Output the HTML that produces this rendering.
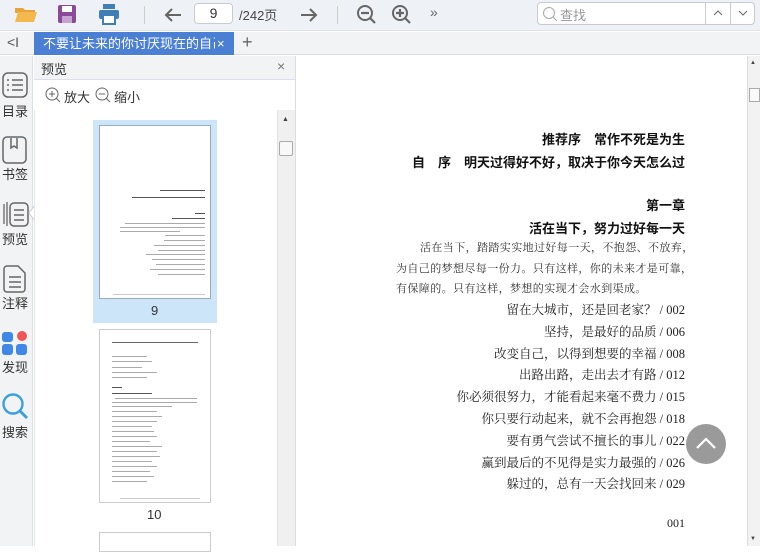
<!DOCTYPE html>
<html><head><meta charset="utf-8"><style>
*{margin:0;padding:0;box-sizing:border-box}
body{width:760px;height:546px;overflow:hidden;position:relative;background:#fff;font-family:"Liberation Sans","Noto Sans CJK SC",sans-serif;font-size:13px;color:#333}
.a{position:absolute}
.r{position:absolute;right:75px;white-space:nowrap;color:#222}
.h{font-weight:bold;font-size:13px;font-family:"Liberation Sans","Noto Sans CJK SC",sans-serif;color:#111}
.t{font-family:"Liberation Serif","Noto Serif CJK SC",serif;font-size:12.5px}
.p{position:absolute;white-space:nowrap;font-family:"Liberation Serif","Noto Serif CJK SC",serif;font-size:11px;color:#333}
.side div{position:absolute;left:0;width:30px;text-align:center;font-size:13px;color:#333}
.ln{position:absolute;height:1px;background:#aaa}
</style></head><body>
<div class="a" style="left:0;top:0;width:760px;height:31px;background:#eef2f7;border-bottom:1px solid #dfe3e8"></div>
<svg class="a" style="left:14px;top:4px" width="24" height="20"><path d="M1 4h8l2 2h10v3H1z" fill="#e7a43a"/><path d="M1 18L4 8h19l-3 10z" fill="#f3b84e"/></svg>
<svg class="a" style="left:57px;top:4px" width="20" height="20"><rect x="1" y="1" width="18" height="18" rx="2" fill="#8a4a99"/><rect x="5" y="2" width="10" height="6" fill="#fff"/><rect x="5" y="12" width="10" height="7" fill="#c9a3d0"/></svg>
<svg class="a" style="left:98px;top:3px" width="22" height="22"><rect x="5" y="1" width="12" height="5" fill="#3f7fb5"/><rect x="1" y="7" width="20" height="9" rx="2" fill="#3f7fb5"/><rect x="5" y="12" width="12" height="9" fill="#fff" stroke="#3f7fb5" stroke-width="2"/></svg>
<div class="a" style="left:144px;top:6px;width:1px;height:18px;background:#ccc"></div>
<svg class="a" style="left:163px;top:5px" width="20" height="20"><path d="M18 10H3M9 4l-6 6 6 6" stroke="#666" stroke-width="2" fill="none"/></svg>
<div class="a" style="left:194px;top:3px;width:39px;height:21px;border:1px solid #c8ccd2;border-radius:4px;background:#fff;text-align:center;line-height:19px;font-size:14px">9</div>
<div class="a" style="left:239px;top:5px;font-size:13px;color:#444">/242页</div>
<svg class="a" style="left:299px;top:5px" width="20" height="20"><path d="M2 10h15M11 4l6 6-6 6" stroke="#666" stroke-width="2" fill="none"/></svg>
<div class="a" style="left:337px;top:6px;width:1px;height:18px;background:#ccc"></div>
<svg class="a" style="left:356px;top:4px" width="22" height="22"><circle cx="9" cy="9" r="7" stroke="#666" stroke-width="2" fill="none"/><path d="M5 9h8M14 14l5 5" stroke="#666" stroke-width="2.2"/></svg>
<svg class="a" style="left:391px;top:4px" width="22" height="22"><circle cx="9" cy="9" r="7" stroke="#666" stroke-width="2" fill="none"/><path d="M5 9h8M9 5v8M14 14l5 5" stroke="#666" stroke-width="2.2"/></svg>
<div class="a" style="left:430px;top:4px;font-size:14px;color:#666">»</div>
<div class="a" style="left:537px;top:2px;width:218px;height:23px;border:1px solid #c8ccd2;border-radius:4px;background:#fff"></div>
<div class="a" style="left:705px;top:2px;width:1px;height:23px;background:#c8ccd2"></div>
<div class="a" style="left:730px;top:2px;width:1px;height:23px;background:#c8ccd2"></div>
<svg class="a" style="left:542px;top:6px" width="16" height="16"><circle cx="7" cy="7" r="5.5" stroke="#aaa" fill="none"/><path d="M11 11l4 4" stroke="#aaa"/></svg>
<div class="a" style="left:560px;top:5px;font-size:13px;color:#999">查找</div>
<svg class="a" style="left:712px;top:9px" width="12" height="8"><path d="M2 6l4-4 4 4" stroke="#666" fill="none"/></svg>
<svg class="a" style="left:737px;top:9px" width="12" height="8"><path d="M2 2l4 4 4-4" stroke="#666" fill="none"/></svg>
<div class="a" style="left:0;top:32px;width:760px;height:23px;background:#f2f3f5;border-bottom:1px solid #dcdcdc"></div>
<div class="a" style="left:7px;top:34px;font-size:14px;color:#555">&lt;I</div>
<div class="a" style="left:34px;top:32px;width:200px;height:23px;background:#4a7fd4;color:#fff;font-size:13px;line-height:23px;white-space:nowrap;overflow:hidden">
<div style="position:absolute;left:9px;top:0;width:172px;overflow:hidden;white-space:nowrap">不要让未来的你讨厌现在的自己</div>
<span style="position:absolute;left:183px;top:0">×</span></div>
<div class="a" style="left:242px;top:32px;font-size:18px;color:#666">+</div>
<div class="a side" style="left:0;top:56px;width:33px;height:490px;background:#f2f3f5;border-right:1px solid #dde">
<svg class="a" style="left:2px;top:16px" width="26" height="26"><rect x="1" y="1" width="24" height="24" rx="5" stroke="#666" stroke-width="1.5" fill="none"/><path d="M5 8h2M10 8h11M5 13h2M10 13h11M5 18h2M10 18h11" stroke="#666" stroke-width="1.5"/></svg>
<div style="top:45px">目录</div>
<svg class="a" style="left:2px;top:80px" width="26" height="28"><rect x="1" y="1" width="23" height="26" rx="4" stroke="#666" stroke-width="1.5" fill="none"/><path d="M9 2v10l3-2 3 2V2" stroke="#666" stroke-width="1.5" fill="none"/></svg>
<div style="top:108px">书签</div>
<svg class="a" style="left:2px;top:144px" width="28" height="28"><path d="M2 4v20M5 2v24" stroke="#666" stroke-width="1.3"/><rect x="8" y="3" width="18" height="23" rx="4" stroke="#666" stroke-width="1.5" fill="none"/><path d="M12 10h10M12 15h10M12 20h10" stroke="#666" stroke-width="1.5"/></svg>
<div style="top:173px">预览</div>
<svg class="a" style="left:3px;top:209px" width="24" height="28"><path d="M1 4a3 3 0 0 1 3-3h11l7 7v16a3 3 0 0 1-3 3H4a3 3 0 0 1-3-3z" stroke="#666" stroke-width="1.5" fill="none"/><path d="M6 12h12M6 17h12M6 22h12" stroke="#666" stroke-width="1.5"/></svg>
<div style="top:237px">注释</div>
<svg class="a" style="left:2px;top:274px" width="26" height="26"><rect x="0" y="2" width="11" height="10" rx="3" fill="#3f88e8"/><circle cx="20" cy="6" r="5" fill="#f25555"/><rect x="0" y="14" width="11" height="11" rx="3" fill="#3f88e8"/><rect x="14" y="14" width="11" height="11" rx="3" fill="#3f88e8"/></svg>
<div style="top:301px">发现</div>
<svg class="a" style="left:1px;top:336px" width="28" height="28"><circle cx="12" cy="12" r="9.5" stroke="#3aa0e0" stroke-width="2.4" fill="none"/><path d="M19 19l7 7" stroke="#3aa0e0" stroke-width="3"/></svg>
<div style="top:366px">搜索</div>
</div>
<svg class="a" style="left:28px;top:205px" width="8" height="16"><path d="M7 0L1 8l6 8" fill="#fff" stroke="#ccc"/></svg>
<div class="a" style="left:34px;top:56px;width:262px;height:24px;background:#f2f3f5;border-bottom:1px solid #dde"></div>
<div class="a" style="left:41px;top:59px;font-size:13px;color:#333">预览</div>
<div class="a" style="left:277px;top:58px;font-size:14px;color:#777">×</div>
<svg class="a" style="left:45px;top:87px" width="16" height="16"><circle cx="7" cy="7" r="6" stroke="#666" fill="none"/><path d="M4 7h6M7 4v6M11 11l4 4" stroke="#666"/></svg>
<div class="a" style="left:64px;top:87px;font-size:13px">放大</div>
<svg class="a" style="left:95px;top:87px" width="16" height="16"><circle cx="7" cy="7" r="6" stroke="#666" fill="none"/><path d="M4 7h6M11 11l4 4" stroke="#666"/></svg>
<div class="a" style="left:114px;top:87px;font-size:13px">缩小</div>
<div class="a" style="left:34px;top:110px;width:1px;height:436px;background:#e5e5e5"></div>
<div class="a" style="left:277px;top:110px;width:18px;height:436px;background:#f0f0f0;border-left:1px solid #e2e2e2"></div>
<div class="a" style="left:282px;top:116px;font-size:7px;color:#444">▲</div>
<div class="a" style="left:279px;top:141px;width:14px;height:15px;background:#f8f8f8;border:1px solid #aaa;border-radius:2px"></div>
<div class="a" style="left:295px;top:56px;width:1px;height:490px;background:#ddd"></div>
<div class="a" style="left:93px;top:120px;width:124px;height:203px;background:#cde5f8"></div>
<div class="a" style="left:99px;top:125px;width:112px;height:174px;background:#fff;border:1px solid #9ab"></div>
<div class="a" style="left:151px;top:303px;font-size:13px">9</div>
<div class="ln" style="left:160px;top:190px;width:45px;background:#555"></div>
<div class="ln" style="left:132px;top:197px;width:73px;background:#555"></div>
<div class="ln" style="left:195px;top:213px;width:10px;background:#555"></div>
<div class="ln" style="left:172px;top:218px;width:33px;background:#555"></div>
<div class="ln" style="left:125px;top:223px;width:80px"></div>
<div class="ln" style="left:120px;top:227px;width:85px"></div>
<div class="ln" style="left:120px;top:231px;width:60px"></div>
<div class="ln" style="left:165px;top:235px;width:40px"></div>
<div class="ln" style="left:164px;top:240px;width:41px"></div>
<div class="ln" style="left:154px;top:245px;width:51px"></div>
<div class="ln" style="left:158px;top:250px;width:47px"></div>
<div class="ln" style="left:146px;top:254px;width:59px"></div>
<div class="ln" style="left:152px;top:259px;width:53px"></div>
<div class="ln" style="left:156px;top:264px;width:49px"></div>
<div class="ln" style="left:150px;top:269px;width:55px"></div>
<div class="ln" style="left:158px;top:274px;width:47px"></div>
<div class="ln" style="left:113px;top:294px;width:92px;background:#ccc"></div>
<div class="a" style="left:99px;top:329px;width:112px;height:174px;background:#fff;border:1px solid #ccc"></div>
<div class="a" style="left:147px;top:507px;font-size:13px">10</div>
<div class="ln" style="left:112px;top:342px;width:86px;background:#666"></div>
<div class="ln" style="left:112px;top:356px;width:35px"></div>
<div class="ln" style="left:112px;top:361px;width:40px"></div>
<div class="ln" style="left:112px;top:367px;width:30px"></div>
<div class="ln" style="left:112px;top:372px;width:45px"></div>
<div class="ln" style="left:112px;top:377px;width:35px"></div>
<div class="ln" style="left:112px;top:387px;width:10px;background:#555"></div>
<div class="ln" style="left:112px;top:393px;width:40px;background:#555"></div>
<div class="ln" style="left:115px;top:398px;width:82px"></div>
<div class="ln" style="left:112px;top:402px;width:85px"></div>
<div class="ln" style="left:112px;top:406px;width:60px"></div>
<div class="ln" style="left:112px;top:411px;width:45px"></div>
<div class="ln" style="left:112px;top:416px;width:50px"></div>
<div class="ln" style="left:112px;top:421px;width:45px"></div>
<div class="ln" style="left:112px;top:426px;width:40px"></div>
<div class="ln" style="left:112px;top:431px;width:42px"></div>
<div class="ln" style="left:112px;top:436px;width:45px"></div>
<div class="ln" style="left:112px;top:441px;width:38px"></div>
<div class="ln" style="left:112px;top:446px;width:50px"></div>
<div class="ln" style="left:112px;top:451px;width:45px"></div>
<div class="ln" style="left:112px;top:456px;width:48px"></div>
<div class="ln" style="left:112px;top:461px;width:40px"></div>
<div class="ln" style="left:112px;top:466px;width:45px"></div>
<div class="ln" style="left:112px;top:471px;width:38px"></div>
<div class="ln" style="left:112px;top:476px;width:42px"></div>
<div class="ln" style="left:112px;top:481px;width:35px"></div>
<div class="ln" style="left:120px;top:498px;width:80px;background:#ccc"></div>
<div class="a" style="left:99px;top:532px;width:112px;height:20px;background:#fff;border:1px solid #ccc"></div>
<div class="a" style="left:747px;top:56px;width:13px;height:490px;background:#f2f2f2;border-left:1px solid #ddd"></div>
<div class="a" style="left:750px;top:60px;font-size:6px;color:#444">▲</div>
<div class="a" style="left:749px;top:88px;width:11px;height:14px;background:#fafafa;border:1px solid #aaa"></div>
<div class="a" style="left:750px;top:536px;font-size:6px;color:#444">▼</div>
<div class="r h" style="top:129px">推荐序　常作不死是为生</div>
<div class="r h" style="top:152px">自　序　明天过得好不好，取决于你今天怎么过</div>
<div class="r h" style="top:195px">第一章</div>
<div class="r h" style="top:218px">活在当下，努力过好每一天</div>
<div class="p" style="left:420px;top:239px;letter-spacing:0.4px">活在当下，踏踏实实地过好每一天，不抱怨、不放弃，</div>
<div class="p" style="left:396px;top:260px;letter-spacing:0.4px">为自己的梦想尽每一份力。只有这样，你的未来才是可靠，</div>
<div class="p" style="left:396px;top:280px;letter-spacing:0.4px">有保障的。只有这样，梦想的实现才会水到渠成。</div>
<div class="r t" style="top:300px">留在大城市，还是回老家？ / 002</div>
<div class="r t" style="top:322px">坚持，是最好的品质 / 006</div>
<div class="r t" style="top:344px">改变自己，以得到想要的幸福 / 008</div>
<div class="r t" style="top:365px">出路出路，走出去才有路 / 012</div>
<div class="r t" style="top:387px">你必须很努力，才能看起来毫不费力 / 015</div>
<div class="r t" style="top:409px">你只要行动起来，就不会再抱怨 / 018</div>
<div class="r t" style="top:431px">要有勇气尝试不擅长的事儿 / 022</div>
<div class="r t" style="top:453px">赢到最后的不见得是实力最强的 / 026</div>
<div class="r t" style="top:474px">躲过的，总有一天会找回来 / 029</div>
<div class="r t" style="top:516px;font-size:12px">001</div>
<div class="a" style="left:686px;top:424px;width:40px;height:40px;border-radius:50%;background:#9a9a9a"></div>
<svg class="a" style="left:694px;top:432px" width="24" height="24"><path d="M3 16l9-9 9 9" stroke="#fff" stroke-width="2.2" fill="none"/></svg>
</body></html>
